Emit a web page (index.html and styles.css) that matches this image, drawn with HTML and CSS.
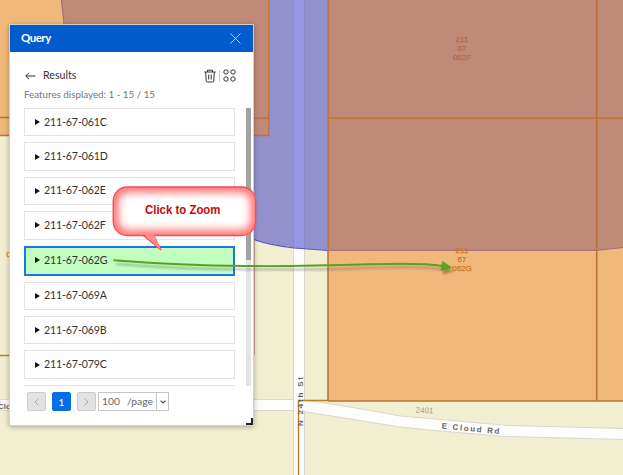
FILE: index.html
```html
<!DOCTYPE html>
<html lang="en">
<head>
<meta charset="utf-8">
<title>Query</title>
<link rel="stylesheet" href="styles.css">
</head>
<body>
<main class="stage">
  <svg class="map" viewBox="0 0 623 475" width="623" height="475">
    <rect width="623" height="475" fill="#f2eed0"/>
    <!-- roads -->
    <g fill="#fdfdfd" stroke="#d9d8ce" stroke-width="1">
      <path d="M0 399.5H294V410.5H0Z"/>
      <path d="M293.500 -2H304.500V477H293.500Z"/>
      <path d="M304 400.500L318 402Q370 410 400 416L440 419.500L508 425.500L625 428.500V439.500L506 436.500L440 431L400 427L304 411.500Z"/>
      <path stroke="none" d="M294 400H306V411H294Z"/>
    </g>
    <!-- parcels -->
    <g fill="#f0b97b">
      <path d="M0 0H269V135.500H0Z"/>
      <path d="M328 0H623V401H328Z"/>
    </g>
    <!-- overlay zone -->
    <path fill="#c08a78" d="M61 0H269V135.500H94L64 24Z"/>
    <path fill="#c08a78" d="M328 0H623V247.500L597 250.500H328Z"/>
    <path fill="#9391cd" d="M269.500 0H327.500V250.500Q290 248 270 243.500L254 239.500V136H269.500Z"/>
    <path fill="#9896e4" d="M294 0H304V249L294 248Z"/>
    <path fill="none" stroke="#8886c4" stroke-width=".7" d="M293.500 0V248M304.500 0V249"/>
    <path fill="none" stroke="#5c53c7" stroke-width="1.200" d="M254 239.500Q270 245 294 248L328 250.500"/>
    <path fill="none" stroke="#a26b7c" d="M61.500 0L64 25M328 250.300H597L623 247.500"/>
    <g fill="none" stroke="#bd7238" stroke-width="1.600">
      <path d="M0 117.500H10M0 135.500H269V0M254 118.300H269"/>
      <path d="M328 0V401M328 118.300H623M596.700 0V401M328 401H623"/>
    </g>
    <path fill="none" stroke="#b98221" stroke-width="1.400" d="M0 355.500H10M328 400.500H298.500V475"/>
    <path stroke="#d3aa98" d="M254.500 240V355"/>
    <g class="parcel-label">
      <text x="462" y="42.300">211</text><text x="462" y="51.100">67</text><text x="462" y="60">062F</text>
    </g>
    <g class="parcel-label parcel-label-bright">
      <text x="462" y="253.300">211</text><text x="462" y="262.300">67</text><text x="462" y="271.300">062G</text>
      <text x="8.500" y="257">0</text>
    </g>
    <g class="road-label">
      <text x="0" y="0" textLength="49" transform="translate(302.500 426) rotate(-90)">N 24th St</text>
      <text x="0" y="0" textLength="58" transform="translate(441.500 428.500) rotate(5.500)">E Cloud Rd</text>
      <text x="-2" y="409">Clo</text>
    </g>
    <text class="house-no" transform="translate(415.500 412.500) rotate(3)">2401</text>
  </svg>

  <section class="panel">
    <header class="panel-head">
      <h1>Query</h1>
      <svg width="11" height="11" viewBox="0 0 11 11"><path d="M.5.5L10.500 10.500M10.500.5L.5 10.500" fill="none" stroke="#c5dcf8" stroke-width=".9"/></svg>
    </header>
    <div class="toolbar">
      <svg width="11" height="8" viewBox="0 0 11 8"><path d="M10.500 4H.8M4 .7L.7 4L4 7.300" fill="none" stroke="#333" stroke-width="1"/></svg>
      <span class="toolbar-title">Results</span>
      <svg class="trash" width="12" height="14" viewBox="0 0 12 14"><path d="M.3 3H11.700M3.500 3V1.200H8.500V3M1.700 3L2.200 12Q2.300 13 3.300 13H8.700Q9.700 13 9.800 12L10.300 3M4.700 5.500V10.500M7.200 5.500V10.500" fill="none" stroke="#333" stroke-width="1"/></svg>
      <i class="divider"></i>
      <svg width="13" height="13" viewBox="0 0 13 13"><g fill="none" stroke="#333"><circle cx="3" cy="3" r="2.200"/><circle cx="10" cy="3" r="2.200"/><circle cx="3" cy="10" r="2.200"/><circle cx="10" cy="10" r="2.200"/></g></svg>
    </div>
    <p class="count">Features displayed: 1 - 15 / 15</p>
    <div class="results">
      <ul class="list">
        <li>211-67-061C</li>
        <li>211-67-061D</li>
        <li>211-67-062E</li>
        <li>211-67-062F</li>
        <li class="selected">211-67-062G</li>
        <li>211-67-069A</li>
        <li>211-67-069B</li>
        <li>211-67-079C</li>
        <li></li>
      </ul>
      <div class="scrollbar"><div class="thumb"></div></div>
    </div>
    <footer class="pager">
      <span class="page-btn"><svg width="5" height="8" viewBox="0 0 5 8"><path d="M4.300.7L1 4L4.300 7.300"/></svg></span>
      <span class="page-btn current">1</span>
      <span class="page-btn"><svg width="5" height="8" viewBox="0 0 5 8"><path d="M.7.7L4 4L.7 7.300"/></svg></span>
      <span class="page-size"><span class="size-text"><span>100</span><span>/page</span></span><span class="size-arrow"><svg width="6" height="4" viewBox="0 0 6 4"><path d="M.6.6L3 3L5.400.6" fill="none" stroke="#444" stroke-width="1.100"/></svg></span></span>
    </footer>
    <i class="resize"></i>
  </section>

  <svg class="annotations" viewBox="0 0 623 475" width="623" height="475">
    <defs>
      <filter id="soft" x="-20%" y="-100%" width="140%" height="300%"><feGaussianBlur stdDeviation="1.100"/></filter>
      <filter id="glow" x="-20%" y="-20%" width="140%" height="140%"><feGaussianBlur stdDeviation="4"/></filter>
      <clipPath id="bubble"><rect x="113" y="187" width="143" height="48.500" rx="14"/></clipPath>
    </defs>
    <g transform="translate(2 3.500)" filter="url(#soft)" opacity=".4">
      <path d="M114 260.500Q180 265.500 245 266Q310 266.500 370 264.500Q420 262.500 441 266" fill="none" stroke="#555" stroke-width="2"/>
      <path d="M441 262L452 268L441 271Z" fill="#333"/>
    </g>
    <path d="M113.500 260.300Q180 265.500 245 266Q300 266.500 370 264.300Q420 262.500 443 266" fill="none" stroke="#5aa121" stroke-width="1.900"/>
    <path d="M442.500 261L452.500 267.800L440.500 271Z" fill="#55a51e"/>
    <path d="M142 234.500L161 250L153.500 234.500Z" fill="#ff9292" stroke="#fb4d4d" stroke-width="1.100"/>
    <rect x="113" y="187" width="143" height="48.500" rx="14" fill="#fff"/>
    <g clip-path="url(#bubble)"><rect x="113" y="187" width="143" height="48.500" rx="14" fill="none" stroke="#ff6262" stroke-width="10" filter="url(#glow)"/></g>
    <rect x="113.200" y="187" width="142.400" height="48.500" rx="14" fill="none" stroke="#fb4b4b" stroke-width="1.300"/>
    <path d="M144 234L161 250L153.500 234Z" fill="#ff8b8b"/>
    <text class="callout" x="145" y="214.300" textLength="75.500" lengthAdjust="spacingAndGlyphs">Click to Zoom</text>
  </svg>
</main>
</body>
</html>
```

FILE: styles.css
```css
* { box-sizing: border-box; }
body { margin: 0; overflow: hidden; }
.stage {
  position: relative;
  width: 623px;
  height: 475px;
  overflow: hidden;
  font-family: Lato, "Open Sans", sans-serif;
}
svg { display: block; flex: none; }
.map, .annotations { position: absolute; left: 0; top: 0; }
.annotations { pointer-events: none; }

.parcel-label {
  font: 8px "Liberation Sans", sans-serif;
  fill: #b66b4d;
  stroke: #b66b4d;
  stroke-width: .25;
  text-anchor: middle;
}
.parcel-label-bright { fill: #cf7524; stroke: #cf7524; }
.road-label { font: bold 8px "Liberation Sans", sans-serif; fill: #666; }
.house-no { font: 8px "Liberation Sans", sans-serif; fill: #a3a292; }
.callout { font: bold 12px "Liberation Sans", sans-serif; fill: #c70808; }

.panel {
  position: absolute;
  left: 9px;
  top: 24px;
  width: 245px;
  height: 402px;
  display: flex;
  flex-direction: column;
  background: #fff;
  border: 1px solid #d4d2c8;
  box-shadow: 0 1px 5px rgba(0, 0, 0, .3);
  color: #333;
}
.panel-head {
  display: flex;
  align-items: center;
  justify-content: space-between;
  height: 27px;
  padding: 0 12px 0 11px;
  background: #005ccc;
}
.panel-head h1 { margin: 0 0 2px; font-size: 11.5px; font-weight: 700; letter-spacing: -.6px; color: #fff; }
.panel-head h1 { letter-spacing: -.5px; }
.toolbar {
  display: flex;
  align-items: center;
  height: 15px;
  margin: 16px 17px 0 15px;
}
.toolbar-title { margin: 0 0 1px 7px; font-size: 10.6px; }
.trash { margin-left: auto; }
.divider { width: 1px; height: 12px; margin: 0 3px; background: #ccc; }
.count {
  margin: 5px 0 0 14px;
  font-size: 9.8px;
  line-height: 12px;
  color: #757575;
}
.results {
  display: flex;
  justify-content: space-between;
  height: 278px;
  margin: 8px 2px 0 14px;
  overflow: hidden;
}
.list {
  display: flex;
  flex-direction: column;
  gap: 6px;
  width: 211px;
  margin: 0;
  padding: 0;
  list-style: none;
}
.list li {
  display: flex;
  flex: none;
  align-items: center;
  height: 28.4px;
  padding: 0 0 1px 10px;
  border: 1px solid #e4e4e4;
  font-size: 10.6px;
  letter-spacing: -.13px;
}
.list li::before {
  content: "";
  margin: 1px 4px 0 0;
  border: 3px solid transparent;
  border-left: 5px solid #111;
  border-right: 0;
}
.list .selected { height: 30px; padding: 0 0 2px 9px; border: 2px solid #1b76e6; background: #c0fdbf; }
.scrollbar { width: 5px; background: #e4e4e4; }
.thumb { height: 152px; background: #a3a3a3; }

.pager { display: flex; align-items: center; height: 19px; margin: 6px 0 0 17px; }
.page-btn {
  display: flex;
  align-items: center;
  justify-content: center;
  width: 19px;
  height: 19px;
  margin-right: 6px;
  border: 1px solid #ccc;
  border-radius: 2px;
  background: #e2e2e2;
  font-size: 10px;
}
.page-btn path { fill: none; stroke: #aaa; }
.page-btn.current { background: #076fe5; border-color: #076fe5; color: #fff; }
.page-size {
  display: flex;
  width: 71px;
  height: 19px;
  margin-left: -4px;
  border: 1px solid #c4c4c4;
  font-size: 10.3px;
  color: #666;
}
.size-text { display: flex; flex: 1; gap: 7px; align-items: center; padding: 0 0 1px 3px; }
.size-arrow { display: flex; align-items: center; justify-content: center; width: 12px; border-left: 1px solid #c4c4c4; }
.resize {
  position: absolute;
  right: 0;
  bottom: 0;
  width: 7px;
  height: 7px;
  border-right: 2px solid #222;
  border-bottom: 2px solid #222;
}
```
